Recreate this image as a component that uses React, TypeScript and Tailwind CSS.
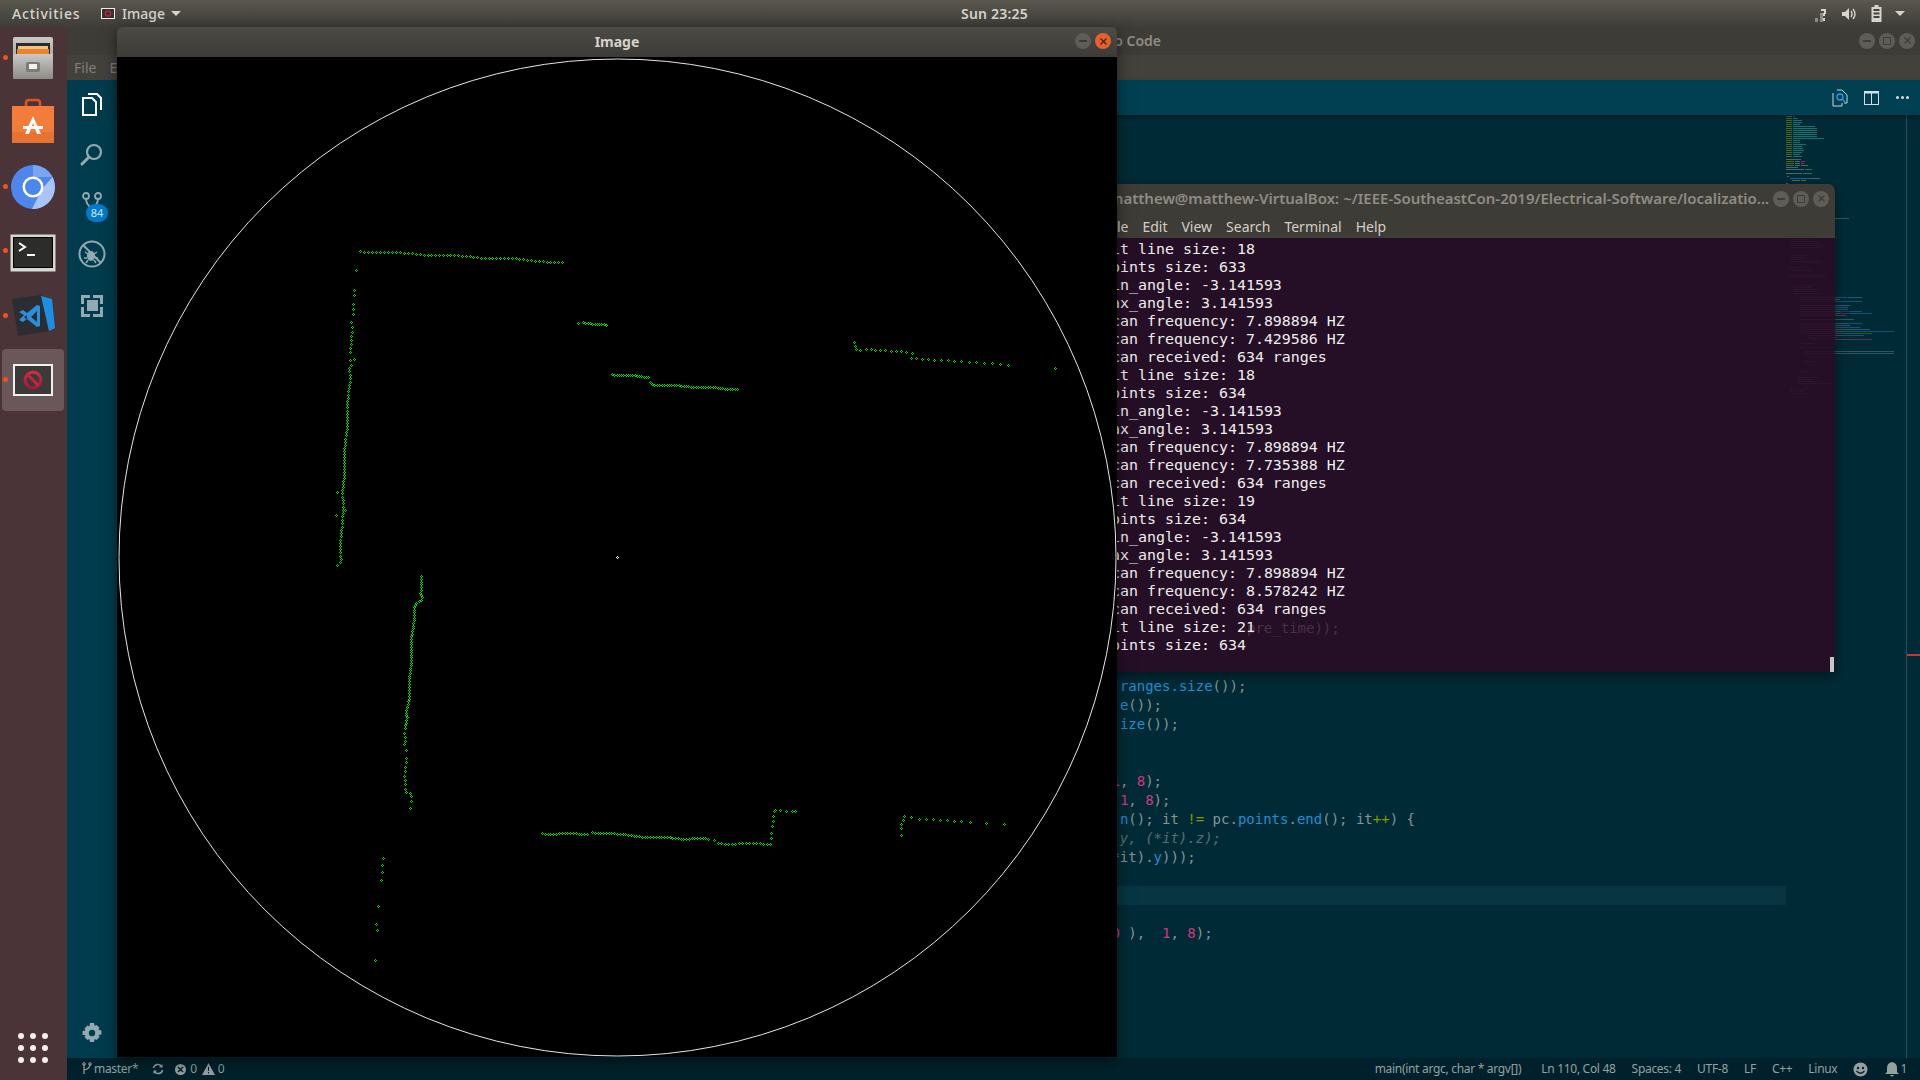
import { ReactNode } from 'react'

type Pt = [number, number]

const UI_FONT = { fontFamily: '"Noto Sans", sans-serif' }

// turns coords read from a zoomed crop back to full page coords
const fromZoom = (ox: number, oy: number, pts: Pt[]): Pt[] =>
  pts.map(([x, y]) => [ox + x / 3, oy + y / 3] as Pt)

// dots along a polyline, with a small repeatable wobble
function trail(pts: Pt[], step: number, wobble = 0.6): Pt[] {
  const out: Pt[] = []
  let n = 0
  for (let i = 0; i < pts.length - 1; i++) {
    const [x1, y1] = pts[i]
    const [x2, y2] = pts[i + 1]
    const len = Math.hypot(x2 - x1, y2 - y1)
    const count = Math.max(1, Math.round(len / step))
    for (let k = 0; k < count; k++) {
      const t = k / count
      n++
      const j = Math.sin(n * 12.9898) * wobble
      const vertical = Math.abs(y2 - y1) > Math.abs(x2 - x1)
      out.push([x1 + (x2 - x1) * t + (vertical ? j : 0), y1 + (y2 - y1) * t + (vertical ? 0 : j)])
    }
  }
  out.push(pts[pts.length - 1])
  return out
}

const scanPoints: Pt[] = [
  ...trail([[360, 251], [420, 254], [500, 258], [562, 262]], 3.9),
  ...fromZoom(320, 230, [
    [109, 121], [103, 181], [103, 196], [100, 223], [100, 238], [100, 253], [94, 277], [97, 292], [97, 307],
    [94, 319], [94, 331], [94, 343], [91, 355], [91, 367], [91, 391], [103, 388], [94, 406],
    [52, 787], [49, 856], [76, 841], [52, 1006], [775, 280],
  ]),
  ...trail([[349, 368], [349, 385], [347, 417], [344, 460], [343, 490], [343, 500], [342, 513], [341.5, 530], [340, 562]], 3.1),
  ...trail([[583, 322], [606, 325]], 2.4, 0.5),
  ...trail([[612, 374], [648, 377]], 2.3, 0.5),
  ...trail([[650, 382], [652, 384], [737, 389]], 2.4, 0.4),
  ...fromZoom(780, 300, [
    [223, 127], [226, 139], [229, 148], [241, 151], [259, 148], [274, 148], [286, 151], [301, 151], [316, 151],
    [334, 154], [349, 154], [364, 154], [379, 157], [397, 160], [394, 175], [409, 175], [427, 178], [445, 178],
    [463, 181], [484, 181], [505, 181], [523, 184], [544, 184], [568, 187], [589, 187], [613, 190], [637, 190],
    [661, 193], [685, 196], [826, 205],
  ]),
  ...trail([[421, 576], [421, 590], [420, 593], [422, 597], [421, 600], [416, 603], [414, 607], [413, 623], [411, 647], [410, 673], [409, 681], [409, 693], [407, 707], [406, 713], [407, 717], [405, 728]], 2.7, 0.5),
  ...fromZoom(320, 560, [
    [253, 520], [256, 530], [256, 542], [253, 553], [259, 571], [259, 595], [259, 607], [256, 622], [256, 634],
    [253, 649], [256, 661], [256, 673], [256, 688], [259, 697], [271, 700], [274, 709], [274, 724], [271, 745],
    [190, 895], [187, 916], [187, 937], [184, 961], [175, 1039], [169, 1093], [172, 1111], [166, 1201],
    [1183, 841], [1352, 835], [1352, 820], [1355, 799], [1358, 784], [1358, 769], [1361, 754], [1364, 751],
    [1379, 751], [1397, 754], [1415, 754], [1424, 754],
  ]),
  ...trail([[542, 833], [587, 834]], 2.8, 0.6),
  ...trail([[592, 832], [653, 837], [708, 839]], 2.8, 0.6),
  ...trail([[718, 843], [770, 844]], 3.4, 0.5),
  ...fromZoom(520, 780, [
    [1144, 166], [1144, 145], [1144, 133], [1150, 121], [1153, 109], [1174, 112], [1198, 118], [1219, 118],
    [1240, 118], [1261, 121], [1282, 121], [1303, 124], [1324, 124], [1351, 127], [1399, 130], [1453, 133],
  ]),
]

function dotPath(pts: Pt[]) {
  return pts
    .map(([px, py]) => {
      const x = Math.round(px) - 117
      const y = Math.round(py) - 57
      return `M${x} ${y - 1}h1v1h-1zM${x - 1} ${y}h1v1h-1zM${x + 1} ${y}h1v1h-1zM${x} ${y + 1}h1v1h-1z`
    })
    .join('')
}

const terminalLines = [
  'fit line size: 18',
  'points size: 633',
  'min_angle: -3.141593',
  'max_angle: 3.141593',
  'scan frequency: 7.898894 HZ',
  'scan frequency: 7.429586 HZ',
  'scan received: 634 ranges',
  'fit line size: 18',
  'points size: 634',
  'min_angle: -3.141593',
  'max_angle: 3.141593',
  'scan frequency: 7.898894 HZ',
  'scan frequency: 7.735388 HZ',
  'scan received: 634 ranges',
  'fit line size: 19',
  'points size: 634',
  'min_angle: -3.141593',
  'max_angle: 3.141593',
  'scan frequency: 7.898894 HZ',
  'scan frequency: 8.578242 HZ',
  'scan received: 634 ranges',
  'fit line size: 21',
  'points size: 634',
]

// y, x, width, colour, all in minimap pixels
const OL = '#7f8f00'
const TE = '#2aa198'
const BL = '#268bd2'
const GR = '#7b8f92'
const RD = '#d33682'
const miniRows: [number, number, number, string][] = [
  ...[9, 12, 16, 16, 14, 29, 31, 31, 31, 31, 31, 38, 14, 14].flatMap((w, i): [number, number, number, string][] => [
    [i * 2 + 1, 0, 6, OL],
    [i * 2 + 1, 7, w - 7, TE],
  ]),
  ...[20, 16, 17, 18, 16, 14, 16].flatMap((w, i): [number, number, number, string][] => [
    [i * 2 + 29, 0, 6, OL],
    [i * 2 + 29, 7, w - 7, TE],
  ]),
  [44, 0, 15, GR],
  [46, 0, 8, OL],
  [46, 9, 5, GR],
  [46, 15, 4, RD],
  [48, 0, 8, OL],
  [48, 9, 5, GR],
  [48, 15, 3, RD],
  [50, 0, 8, OL],
  [50, 9, 5, GR],
  [50, 15, 7, '#dc6a2f'],
  [52, 0, 12, GR],
  [54, 0, 18, GR],
  [54, 19, 7, TE],
  [58, 0, 16, GR],
  [58, 17, 9, TE],
  [61, 1, 2, GR],
  [63, 4, 22, BL],
  [63, 26, 8, GR],
  [65, 6, 8, GR],
  [65, 15, 5, '#b58900'],
  [68, 0, 2, GR],
  [71, 0, 28, GR],
  [103, 49, 14, GR],
  ...[26, 22, 28, 30, 34, 30].map((w, i): [number, number, number, string] => [122 + i * 2, 5, w, i % 2 ? RD : BL]),
  ...[18, 14, 15, 30].map((w, i): [number, number, number, string] => [140 + i * 2, 5, w, GR]),
  [152, 2, 14, GR],
  [155, 6, 20, GR],
  [160, 3, 36, GR],
  [162, 4, 38, RD],
  [170, 5, 26, GR],
  [172, 7, 20, GR],
  [174, 7, 26, GR],
  [176, 7, 22, GR],
  [178, 7, 28, GR],
  [182, 11, 50, BL],
  [182, 62, 14, GR],
  [184, 14, 40, GR],
  [186, 14, 50, BL],
  [186, 64, 12, BL],
  [190, 14, 50, GR],
  [192, 14, 34, RD],
  [192, 48, 14, BL],
  [194, 14, 34, GR],
  [194, 48, 14, BL],
  [196, 14, 40, GR],
  [196, 54, 10, '#8a3274'],
  [196, 64, 12, BL],
  [198, 14, 40, GR],
  [198, 54, 10, '#8a3274'],
  [198, 64, 22, BL],
  [200, 14, 46, RD],
  [204, 14, 54, GR],
  [208, 14, 46, GR],
  [208, 60, 16, BL],
  [210, 14, 50, GR],
  [212, 14, 30, RD],
  [212, 44, 30, BL],
  [214, 14, 30, GR],
  [214, 44, 40, GR],
  [216, 14, 44, GR],
  [216, 58, 50, BL],
  [218, 18, 38, RD],
  [218, 56, 30, OL],
  [220, 22, 34, GR],
  [220, 56, 22, BL],
  [222, 22, 28, GR],
  [224, 26, 60, RD],
  [228, 14, 16, GR],
  [232, 14, 30, GR],
  [236, 18, 90, GR],
  [238, 18, 60, GR],
  [238, 78, 30, GR],
  [246, 18, 14, GR],
  [256, 14, 6, GR],
  [262, 12, 22, GR],
  [264, 12, 14, GR],
  [266, 12, 18, GR],
  [268, 12, 34, GR],
  [274, 4, 18, GR],
  [276, 4, 14, OL],
  [278, 4, 20, GR],
]

function CircleButton({ children, active }: { children: ReactNode; active?: boolean }) {
  return (
    <div className={`flex h-4 w-4 items-center justify-center rounded-full ${active ? 'bg-[#e95f2c]' : 'bg-[#5f5d57]'}`}>
      {children}
    </div>
  )
}

function MinGlyph({ color = '#3e3d38' }: { color?: string }) {
  return <div className="h-[2px] w-2" style={{ background: color }} />
}

function MaxGlyph({ color = '#3e3d38' }: { color?: string }) {
  return <div className="h-2 w-2 border" style={{ borderColor: color }} />
}

function CloseGlyph({ color = '#3e3d38' }: { color?: string }) {
  return (
    <svg width="9" height="9" viewBox="0 0 9 9">
      <path d="M1.5 1.5l6 6M7.5 1.5l-6 6" stroke={color} strokeWidth="1.3" fill="none" />
    </svg>
  )
}

function FilesIcon() {
  return (
    <svg width="44" height="44" viewBox="0 0 44 44">
      <defs>
        <linearGradient id="cab" x1="0" y1="0" x2="0" y2="1">
          <stop offset="0" stopColor="#c9c9c5" />
          <stop offset="1" stopColor="#8b8b87" />
        </linearGradient>
      </defs>
      <rect x="2" y="1" width="40" height="42" rx="2" fill="url(#cab)" />
      <rect x="5" y="7" width="34" height="12" fill="#2b2b2b" />
      <rect x="7" y="10" width="30" height="4" fill="#f6c27c" />
      <rect x="6" y="13" width="32" height="5" fill="#e8852f" />
      <rect x="2" y="18" width="40" height="25" rx="1" fill="url(#cab)" />
      <rect x="15" y="26" width="14" height="10" rx="2" fill="#7b7b77" />
      <rect x="18" y="28" width="8" height="5" fill="#f2f2f0" />
    </svg>
  )
}

function StoreIcon() {
  return (
    <svg width="44" height="46" viewBox="0 0 44 46" className="-mt-[3px]">
      <defs>
        <linearGradient id="bag" x1="0" y1="0" x2="0" y2="1">
          <stop offset="0" stopColor="#f47c3c" />
          <stop offset="1" stopColor="#ef7d3a" />
        </linearGradient>
      </defs>
      <path d="M15 9V5q0-3 3-3h8q3 0 3 3v4" fill="none" stroke="#d9561f" strokeWidth="2.5" />
      <path d="M1 8h42v37H1z" fill="url(#bag)" />
      <path d="M1 34h42v11H1z" fill="#e8722f" />
      <path d="M22 18l8 18h-4l-4-11-4 11h-4z" fill="#fff" />
      <rect x="12" y="28" width="20" height="3" fill="#fff" />
    </svg>
  )
}

function ChromiumIcon() {
  return (
    <svg width="46" height="46" viewBox="0 0 46 46">
      <circle cx="23" cy="23" r="22" fill="#4e86ee" />
      <path d="M23 1a22 22 0 0 1 19.5 12H23z" fill="#7ba5f2" />
      <path d="M42.5 13A22 22 0 0 1 22 45l10-20z" fill="#a9c5f8" />
      <circle cx="23" cy="23" r="10.5" fill="#fff" />
      <circle cx="23" cy="23" r="8" fill="#4a85f0" />
    </svg>
  )
}

function TerminalIcon() {
  return (
    <svg width="46" height="38" viewBox="0 0 46 38" className="mt-[3px]">
      <rect x="0.5" y="0.5" width="45" height="37" fill="#d6d6d2" />
      <rect x="3" y="3" width="40" height="31" fill="#000" />
      <rect x="4" y="4" width="38" height="29" fill="#2c2c2a" />
      <path d="M9 9l6 4-6 4" fill="none" stroke="#fff" strokeWidth="2" />
      <rect x="17" y="20" width="8" height="2" fill="#fff" />
    </svg>
  )
}

function CodeIcon() {
  return (
    <svg width="44" height="44" viewBox="0 0 44 44">
      <path d="M1 5l29-4 8 36-31 5z" fill="#2b2d30" />
      <path d="M30 2l11 3 3 29-6 3z" fill="#1c8fe3" />
      <path d="M8 18l4-2 4 3 10-8 3 1v20l-3 1-10-8-4 3-4-2 5-5zM16 21l-3 2 3 3zM26 17l-6 6 6 5z" fill="#2a8fdc" fillRule="evenodd" />
    </svg>
  )
}

function ImageIcon() {
  return (
    <svg width="40" height="32" viewBox="0 0 40 32">
      <defs>
        <radialGradient id="noway" cx="0.5" cy="0.3" r="0.8">
          <stop offset="0" stopColor="#ee3f4a" />
          <stop offset="1" stopColor="#a0123a" />
        </radialGradient>
      </defs>
      <rect x="1" y="1" width="38" height="30" fill="#3a3a38" stroke="#f0f0f0" strokeWidth="2" />
      <circle cx="20" cy="16" r="8" fill="none" stroke="url(#noway)" strokeWidth="3" />
      <path d="M14.5 10.5l11 11" stroke="#d0203f" strokeWidth="3" />
    </svg>
  )
}

function Dock() {
  const items = [
    { icon: <FilesIcon />, dot: true },
    { icon: <StoreIcon />, dot: false },
    { icon: <ChromiumIcon />, dot: true },
    { icon: <TerminalIcon />, dot: true },
    { icon: <CodeIcon />, dot: true },
    { icon: <ImageIcon />, dot: true, active: true },
  ]
  return (
    <div className="flex h-full w-[67px] shrink-0 flex-col bg-[#4a3438]">
      <div className="-mt-px flex flex-col">
        {items.map((item, i) => (
          <div key={i} className="relative flex h-[64.4px] items-center justify-center pr-[1px]">
            {item.active && <div className="absolute left-[2px] top-[1px] h-[62px] w-[62px] rounded-[4px] bg-[#6a5759]" />}
            {item.dot && <div className="absolute left-[3px] top-[29px] h-[5px] w-[5px] rounded-full bg-[#e95420]" />}
            <div className="relative flex">{item.icon}</div>
          </div>
        ))}
      </div>
      <div className="mt-auto mb-[17px] ml-[18px] grid w-[30px] grid-cols-3 gap-[6px]">
        {Array.from({ length: 9 }).map((_, i) => (
          <div key={i} className="h-[6px] w-[6px] rounded-full bg-[#f2efec]" />
        ))}
      </div>
    </div>
  )
}

function TopBar() {
  return (
    <div
      className="relative flex h-[27px] shrink-0 items-center bg-gradient-to-b from-[#5a574f] to-[#3e3d38] text-[14px] font-medium text-[#d8d4cc]"
      style={UI_FONT}
    >
      <span className="ml-[12px] w-[89px] tracking-[0.8px]">Activities</span>
      <svg width="14" height="11" viewBox="0 0 14 11" className="mr-[7px]">
        <rect x="0.5" y="0.5" width="13" height="10" fill="#333" stroke="#eee" />
        <circle cx="7" cy="5.5" r="2.6" fill="none" stroke="#c8203c" strokeWidth="1.4" />
      </svg>
      <span>Image</span>
      <div className="ml-[6px] h-0 w-0 border-x-[5px] border-t-[5px] border-x-transparent border-t-[#d8d4cc]" />
      <span className="absolute left-[961px] font-semibold tracking-[0.2px]">Sun 23:25</span>
      <div className="ml-auto flex items-center">
        <svg width="14" height="16" viewBox="0 0 14 16" className="mr-[13px]">
          <path d="M0 16v-4h3v4zM5 16v-9h3v9z" fill="#8d8a83" />
          <path d="M6 3h5v5h-1v2H8V7h1V5H6z" fill="#d8d4cc" />
          <rect x="8" y="12" width="2" height="3" fill="#d8d4cc" />
        </svg>
        <svg width="15" height="14" viewBox="0 0 15 14" className="mr-[14px]">
          <path d="M0 5h3l4-4v12l-4-4H0z" fill="#d8d4cc" />
          <path d="M9 4q2 3 0 6M11 2q4 5 0 10" fill="none" stroke="#d8d4cc" strokeWidth="1.4" />
        </svg>
        <svg width="11" height="17" viewBox="0 0 11 17" className="mr-[13px]">
          <path d="M3.5 0h4v2h3v15H.5V2h3z" fill="#d8d4cc" />
          <path d="M2.5 4h6v2h-6zM2.5 7.500h6v2h-6zM2.500 11h6v2h-6z" fill="#45433d" />
        </svg>
        <div className="mr-[15px] h-0 w-0 border-x-[5px] border-t-[5px] border-x-transparent border-t-[#d8d4cc]" />
      </div>
    </div>
  )
}

function ActivityBar() {
  const c = '#93aab2'
  return (
    <div className="flex w-[50px] shrink-0 flex-col items-center bg-[#003c4d] pt-[12px]">
      <svg width="22" height="24" viewBox="0 0 22 24" className="mb-[27px]">
        <path d="M2 6h9l4 4v13H2z" fill="none" stroke="#fff" strokeWidth="2" />
        <path d="M7 2h9l4 4v12" fill="none" stroke="#fff" strokeWidth="2" />
      </svg>
      <svg width="24" height="24" viewBox="0 0 24 24" className="mb-[25px]">
        <circle cx="14" cy="9" r="7" fill="none" stroke={c} strokeWidth="2.2" />
        <path d="M9 14l-7 7" stroke={c} strokeWidth="3" strokeLinecap="round" />
      </svg>
      <div className="relative mb-[22px] h-[26px]">
        <svg width="22" height="26" viewBox="0 0 22 26">
          <circle cx="5" cy="4" r="3" fill="none" stroke={c} strokeWidth="1.8" />
          <circle cx="17" cy="4" r="3" fill="none" stroke={c} strokeWidth="1.8" />
          <circle cx="11" cy="20" r="3" fill="none" stroke={c} strokeWidth="1.8" />
          <path d="M5 7q0 5 6 10M17 7q0 5-6 10" fill="none" stroke={c} strokeWidth="1.8" />
        </svg>
        <div className="absolute left-[5px] top-[12px] flex h-[18px] w-[22px] items-center justify-center rounded-full bg-[#007acc] text-[11px] text-[#cfe8f7]" style={UI_FONT}>
          84
        </div>
      </div>
      <svg width="28" height="28" viewBox="0 0 28 28" className="mb-[27px]">
        <circle cx="14" cy="14" r="12.500" fill="none" stroke={c} strokeWidth="2" />
        <path d="M5 5l18 18" stroke={c} strokeWidth="2" />
        <ellipse cx="13" cy="16" rx="4" ry="5" fill={c} />
        <path d="M7 12l3 2M19 12l-3 2M6 18h3M20 18h-3M8 23l2-3M18 23l-2-3" stroke={c} strokeWidth="1.500" />
      </svg>
      <svg width="22" height="22" viewBox="0 0 22 22">
        <path d="M0 0h9v3H3v6H0zM12 0h10v9h-3V3h-7zM0 12h3v7h6v3H0zM22 12v10h-10v-3h7v-7z" fill={c} />
        <rect x="6" y="5" width="11" height="11" fill={c} />
      </svg>
      <svg width="20" height="20" viewBox="0 0 20 20" className="mt-auto mb-[15px]">
        <path
          d="M8 0h4l.6 2.800 2-.9 2.900 2.900-1 2 2.900.7v4l-2.900.6 1 2-2.900 2.900-2-1-.6 3H8l-.6-3-2 1-2.900-2.900 1-2L.6 12V8l2.900-.6-1-2L5.400 2.500l2 .9z"
          fill={c}
        />
        <circle cx="10" cy="10" r="3.200" fill="#003c4d" />
      </svg>
    </div>
  )
}

function Editor() {
  const pink = 'text-[#d33682]'
  const blue = 'text-[#268bd2]'
  const lime = 'text-[#859900]'
  const hidden = ' '.repeat(29)
  return (
    <div className="flex min-w-0 flex-1 flex-col bg-[#002b36]">
      <div className="relative z-10 flex h-[35px] shrink-0 items-center justify-end bg-[#004052] shadow-[0_2px_4px_rgba(0,0,0,0.35)]">
        <svg width="16" height="18" viewBox="0 0 16 18" className="mr-[16px]">
          <path d="M5 1h5l5 5v8h-3M1 4v13h9v-3" fill="none" stroke="#c9d6d8" />
          <circle cx="8" cy="8" r="3" fill="none" stroke="#2f9fe0" strokeWidth="1.300" />
          <path d="M10 10l3 3" stroke="#2f9fe0" strokeWidth="1.300" />
        </svg>
        <svg width="15" height="14" viewBox="0 0 15 14" className="mr-[17px]">
          <rect x="0.500" y="0.500" width="14" height="13" fill="none" stroke="#d5dfe0" />
          <rect x="0" y="0" width="15" height="2.500" fill="#d5dfe0" />
          <rect x="7" y="1" width="1" height="12" fill="#d5dfe0" />
        </svg>
        <div className="mr-[11px] flex gap-[2px]">
          <div className="h-[3px] w-[3px] rounded-full bg-[#d5dfe0]" />
          <div className="h-[3px] w-[3px] rounded-full bg-[#d5dfe0]" />
          <div className="h-[3px] w-[3px] rounded-full bg-[#d5dfe0]" />
        </div>
      </div>
      <div className="flex min-h-0 flex-1">
        <div
          className="min-w-0 flex-1 overflow-hidden whitespace-pre pt-[562px] pl-[750px] text-[14px] leading-[19px] text-[#839496]"
          style={{ fontFamily: '"DejaVu Sans Mono", monospace' }}
        >
          <div>{hidden} <span className={blue}>ranges.size</span>());</div>
          <div>{hidden} <span className={blue}>e</span>());</div>
          <div>{hidden} <span className={blue}>ize</span>());</div>
          <div>&nbsp;</div>
          <div>&nbsp;</div>
          <div>{hidden}<span className={pink}>1</span>, <span className={pink}>8</span>);</div>
          <div>{hidden} <span className={pink}>1</span>, <span className={pink}>8</span>);</div>
          <div>{hidden} <span className={blue}>n</span>(); it <span className={lime}>!=</span> pc.<span className={blue}>points</span>.<span className={blue}>end</span>(); it<span className={lime}>++</span>) {'{'}</div>
          <div className="italic text-[#586e75]">{hidden} y, (*it).z);</div>
          <div>{hidden}*it).<span className={blue}>y</span>)));</div>
          <div>&nbsp;</div>
          <div className="bg-[#073642]">&nbsp;</div>
          <div>&nbsp;</div>
          <div>{hidden}<span className={pink}>0</span> ),  <span className={pink}>1</span>, <span className={pink}>8</span>);</div>
        </div>
        <svg width="120" height="300" viewBox="0 0 120 300" className="shrink-0" shapeRendering="crispEdges">
          {miniRows.map(([y, x, w, color], i) => (
            <rect key={i} x={x} y={y} width={w} height="1" fill={color} opacity={y > 100 ? 0.42 : 0.6} />
          ))}
        </svg>
        <div className="relative w-[14px] shrink-0 border-l border-l-[#24505c]">
          <div className="absolute left-0 right-0 top-[539px] h-[2px] bg-[#c0392b]" />
        </div>
      </div>
    </div>
  )
}

function StatusBar() {
  return (
    <div
      className="flex h-[22px] shrink-0 items-center whitespace-nowrap bg-[#00212b] pl-[15px] pr-[13px] text-[12px] tracking-[-0.3px] text-[#93a1a1]"
      style={UI_FONT}
    >
      <svg width="10" height="14" viewBox="0 0 10 14" className="mr-[2px]">
        <path d="M2 2v10M8 2q0 5-6 6" fill="none" stroke="#93a1a1" strokeWidth="1.200" />
        <circle cx="2" cy="2" r="1.300" fill="none" stroke="#93a1a1" />
        <circle cx="8" cy="2" r="1.300" fill="none" stroke="#93a1a1" />
      </svg>
      <span>master*</span>
      <svg width="12" height="12" viewBox="0 0 12 12" className="ml-[14px]">
        <path d="M1.500 5a4.500 4.500 0 0 1 8-1.800M10.500 7a4.500 4.500 0 0 1-8 1.800" fill="none" stroke="#93a1a1" strokeWidth="1.500" />
        <path d="M10.500 1v3.500H7M1.500 11V7.500H5" fill="#93a1a1" />
      </svg>
      <svg width="13" height="13" viewBox="0 0 13 13" className="ml-[10px]">
        <circle cx="6.500" cy="6.500" r="5.500" fill="#93a1a1" />
        <path d="M4 4l5 5M9 4l-5 5" stroke="#00212b" strokeWidth="1.500" />
      </svg>
      <span className="ml-[3px]">0</span>
      <svg width="13" height="12" viewBox="0 0 13 12" className="ml-[5px]">
        <path d="M6.500 0L13 12H0z" fill="#93a1a1" />
        <path d="M6 4h1v4H6zM6 9h1v1.500H6z" fill="#00212b" />
      </svg>
      <span className="ml-[3px]">0</span>
      <div className="ml-auto flex items-center gap-[16px]">
        <span>main(int argc, char * argv[])</span>
        <span className="ml-[4px]">Ln 110, Col 48</span>
        <span>Spaces: 4</span>
        <span>UTF-8</span>
        <span>LF</span>
        <span>C++</span>
        <span>Linux</span>
        <svg width="15" height="15" viewBox="0 0 15 15">
          <circle cx="7.500" cy="7.500" r="7" fill="#93a1a1" />
          <circle cx="5" cy="6" r="1.200" fill="#00212b" />
          <circle cx="10" cy="6" r="1.200" fill="#00212b" />
          <path d="M3.500 9q4 4.500 8 0" fill="none" stroke="#00212b" strokeWidth="1.300" />
        </svg>
        <div className="ml-[1px] flex items-center gap-[1px]">
          <svg width="14" height="15" viewBox="0 0 14 15">
            <path d="M7 0q5 1 5 6v4l2 2H0l2-2V6q0-5 5-6zM5 13h4q-2 3-4 0z" fill="#93a1a1" />
          </svg>
          <span>1</span>
        </div>
      </div>
    </div>
  )
}

function CodeWindow() {
  return (
    <div className="flex min-w-0 flex-1 flex-col">
      <div className="flex h-[28px] shrink-0 items-center bg-[#3e3c37] pb-[1px] pr-[5px] text-[14px] font-semibold text-[#8f8c84]" style={UI_FONT}>
        <span className="w-[1094px] text-right">Visual Studio Code</span>
        <div className="ml-auto flex gap-[4px]">
          <CircleButton><MinGlyph /></CircleButton>
          <CircleButton><MaxGlyph /></CircleButton>
          <CircleButton><CloseGlyph /></CircleButton>
        </div>
      </div>
      <div className="flex h-[25px] shrink-0 items-center gap-[13px] bg-[#43413c] pl-[7px] text-[14px] text-[#7f7d76]" style={UI_FONT}>
        <span>File</span>
        <span>Edit</span>
      </div>
      <div className="flex min-h-0 flex-1">
        <ActivityBar />
        <Editor />
      </div>
      <StatusBar />
    </div>
  )
}

function ImageWindow() {
  return (
    <div className="absolute left-[117px] top-[27px] z-20 w-[1000px] shadow-[0_4px_14px_rgba(0,0,0,0.5)]">
      <div className="relative flex h-[30px] items-center justify-center rounded-t-[7px] bg-gradient-to-b from-[#4d4b45] to-[#3c3b37] pb-[2px]" style={UI_FONT}>
        <span className="text-[14px] font-bold text-[#d6d2ca]">Image</span>
        <div className="absolute right-[6px] top-[6px] flex gap-[4px]">
          <CircleButton><MinGlyph color="#3a3935" /></CircleButton>
          <CircleButton active><CloseGlyph color="#4a2010" /></CircleButton>
        </div>
      </div>
      <svg width="1000" height="1000" viewBox="0 0 1000 1000" className="block bg-black">
        <circle cx="500.500" cy="500.500" r="498.500" fill="none" stroke="#e6e6e6" strokeWidth="1" />
        <path d={dotPath(scanPoints)} fill="#00dc00" shapeRendering="crispEdges" />
        <path d={dotPath([[617, 557]])} fill="#ffffff" shapeRendering="crispEdges" />
      </svg>
    </div>
  )
}

function TerminalWindow() {
  return (
    <div className="absolute left-[1098px] top-[184px] z-10 flex h-[488px] w-[737px] flex-col rounded-t-[7px] shadow-[0_4px_12px_rgba(0,0,0,0.45)]">
      <div className="flex h-[29px] shrink-0 items-center justify-between rounded-t-[7px] bg-[#3e3c37] pl-[11px] pr-[6px] text-[15px] font-semibold text-[#8f8c84]" style={UI_FONT}>
        <span className="whitespace-nowrap">matthew@matthew-VirtualBox: ~/IEEE-SoutheastCon-2019/Electrical-Software/localizatio...</span>
        <div className="flex gap-[4px]">
          <CircleButton><MinGlyph /></CircleButton>
          <CircleButton><MaxGlyph /></CircleButton>
          <CircleButton><CloseGlyph /></CircleButton>
        </div>
      </div>
      <div className="flex h-[25px] shrink-0 items-center gap-[14px] bg-[#3e3c37] pl-[8px] pt-[1px] text-[14px] text-[#d3d0c8]" style={UI_FONT}>
        <span>File</span>
        <span>Edit</span>
        <span>View</span>
        <span>Search</span>
        <span>Terminal</span>
        <span>Help</span>
      </div>
      <div
        className="relative min-h-0 flex-1 bg-[#2a0b26e0] pl-[4px] pt-[2px] text-[14.95px] leading-[18px] text-[#eeeeec]"
        style={{ fontFamily: '"DejaVu Sans Mono", monospace' }}
      >
        <span className="absolute left-[149px] top-[381px] text-[14px] text-[#4b2f47]">pre_time));</span>
        {terminalLines.map((line, i) => (
          <div key={i} className="relative whitespace-pre">{line}</div>
        ))}
        <div className="absolute right-[1px] bottom-0 h-[15px] w-[4px] bg-[#c8c6c2]" />
      </div>
    </div>
  )
}

export default function App() {
  return (
    <div className="relative flex h-[1080px] w-[1920px] flex-col overflow-hidden bg-black">
      <TopBar />
      <div className="flex min-h-0 flex-1">
        <Dock />
        <CodeWindow />
      </div>
      <TerminalWindow />
      <ImageWindow />
    </div>
  )
}
